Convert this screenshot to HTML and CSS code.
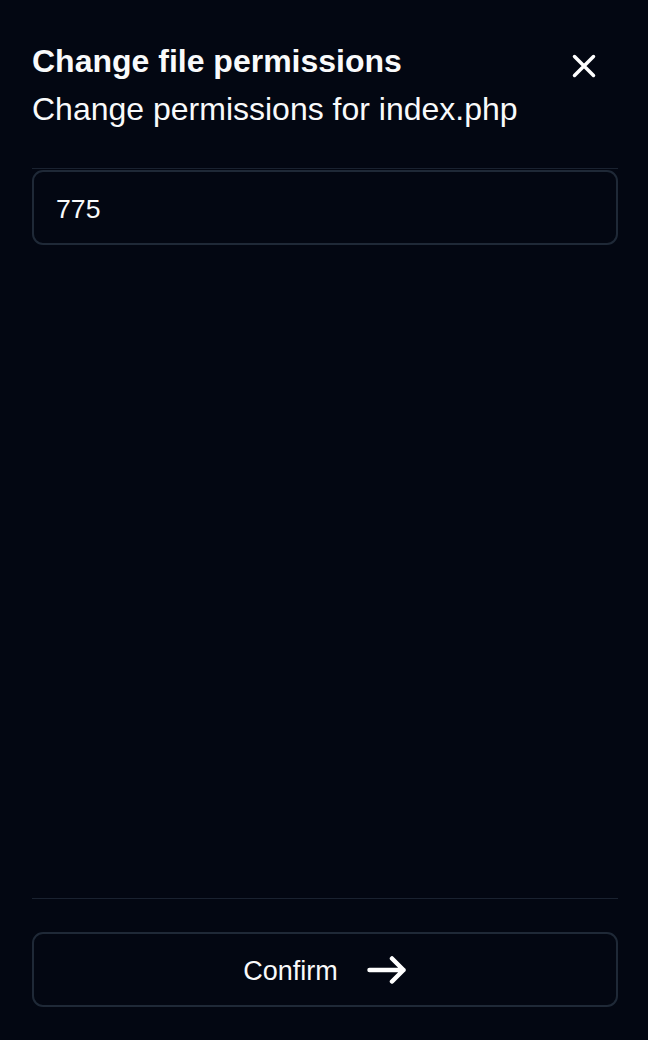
FILE: index.html
```html
<!DOCTYPE html>
<html lang="en">
<head>
    <meta charset="UTF-8">
    <meta name="viewport" content="width=device-width, initial-scale=1.0">
    <title>Change file permissions</title>
    <link rel="stylesheet" href="styles.css">
</head>
<body>
    <div class="sheet">
        <header class="sheet-header">
            <div class="heading">
                <h1>Change file permissions</h1>
                <p>Change permissions for index.php</p>
            </div>
            <button class="close" type="button" aria-label="Close">
                <svg width="24" height="24" viewBox="0 0 24 24" fill="none" stroke="currentColor" stroke-width="3.5" stroke-linecap="round">
                    <path d="M2.5 2.5L21.5 21.5M21.5 2.5L2.5 21.5"/>
                </svg>
            </button>
        </header>

        <main class="sheet-body">
            <input class="field" type="text" value="775">
        </main>

        <footer class="sheet-footer">
            <button class="confirm" type="button">
                <span class="confirm-label">Confirm</span>
                <svg width="40" height="28" viewBox="0 0 40 28" fill="none" stroke="currentColor" stroke-width="4.5" stroke-linecap="round" stroke-linejoin="round">
                    <path d="M2.5 14H36.5M25 2.5L36.5 14L25 25.5"/>
                </svg>
            </button>
        </footer>
    </div>
</body>
</html>
```

FILE: styles.css
```css
html, body {
    margin: 0;
    padding: 0;
    background-color: #030712;
    color: #f9fafb;
    font-family: 'Liberation Sans', Arial, sans-serif;
}
.sheet {
    display: flex;
    flex-direction: column;
    height: 100vh;
    box-sizing: border-box;
    padding: 0 30px 33px 32px;
}
.sheet-header {
    display: flex;
    justify-content: space-between;
    align-items: flex-start;
    padding: 37px 0 35px;
    border-bottom: 1px solid #1a2230;
}
.heading h1 {
    margin: 0;
    font-size: 32px;
    line-height: 48px;
    font-weight: bold;
}
.heading p {
    margin: 0;
    font-size: 32px;
    line-height: 48px;
}
.close {
    display: flex;
    align-items: center;
    justify-content: center;
    width: 64px;
    height: 64px;
    margin: -3px 2px 0 0;
    padding: 0;
    border: none;
    background: none;
    color: #ffffff;
    cursor: pointer;
}
.sheet-body {
    flex: 1;
    padding-top: 1px;
}
.field {
    display: block;
    width: 100%;
    height: 75px;
    box-sizing: border-box;
    padding: 3px 21px 0 22px;
    border: 2px solid #1f2937;
    border-radius: 11px;
    background: transparent;
    color: #f9fafb;
    font-family: inherit;
    font-size: 26.67px;
    outline: none;
}
.sheet-footer {
    padding-top: 33px;
    border-top: 1px solid #1a2230;
}
.confirm {
    display: flex;
    align-items: center;
    justify-content: center;
    gap: 29px;
    width: 100%;
    height: 75px;
    border: 2px solid #1f2937;
    border-radius: 11px;
    background: transparent;
    color: #f9fafb;
    font-family: inherit;
    font-size: 27px;
    cursor: pointer;
}
.confirm-label {
    padding-top: 3px;
}
.confirm svg {
    color: #ffffff;
}
```
